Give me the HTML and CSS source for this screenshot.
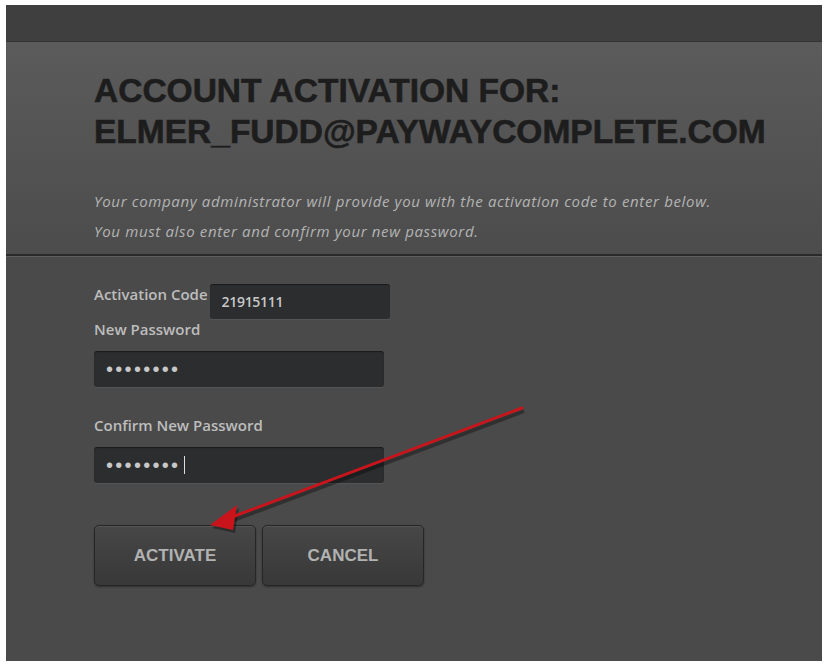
FILE: index.html
```html
<!DOCTYPE html>
<html>

<head>
    <meta charset="UTF-8">
    <title>Account Activation</title>
    <link rel="stylesheet" href="styles.css">
</head>

<body>
    <div class="frame">
        <div class="top-bar"></div>
        <div class="panel">
            <h1 class="title">ACCOUNT ACTIVATION FOR:<br>ELMER_FUDD@PAYWAYCOMPLETE.COM</h1>
            <p class="intro">Your company administrator will provide you with the activation code to enter below.</p>
            <p class="intro">You must also enter and confirm your new password.</p>
        </div>
        <form class="activation-form">
            <div class="code-row">
                <label for="code">Activation Code</label>
                <input type="text" id="code" class="field field-code" value="21915111">
            </div>
            <label for="newPass">New Password</label>
            <input type="password" id="newPass" class="field" value="12345678">
            <label for="confirmPass" class="label-confirm">Confirm New Password</label>
            <div class="field-wrap">
                <input type="password" id="confirmPass" class="field" value="12345678">
                <span class="caret"></span>
            </div>
            <div class="buttons">
                <button type="button" class="btn">ACTIVATE</button>
                <button type="button" class="btn">CANCEL</button>
            </div>
        </form>

        <!-- annotation arrow -->
        <svg class="arrow" width="816" height="656" viewBox="0 0 816 656">
            <g transform="translate(2,3)" stroke="rgba(0,0,0,0.35)" fill="rgba(0,0,0,0.35)">
                <line x1="516" y1="403" x2="226" y2="512" stroke-width="4" />
                <polygon points="204,520 231,500 227,525" stroke="none" />
            </g>
            <line x1="516" y1="403" x2="226" y2="512" stroke="#c8141a" stroke-width="3" stroke-linecap="round" />
            <polygon points="204,520 231,500 227,525" fill="#c8141a" />
        </svg>
    </div>
</body>

</html>
```

FILE: styles.css
```css
/* Account activation page */
body {
    margin: 0;
    padding: 0;
    background-color: #fff;
    font-family: "Open Sans", Lato, sans-serif;
}

.frame {
    position: relative;
    width: 816px;
    height: 656px;
    margin: 5px 0 0 6px;
    background-color: #4a4a4a;
    overflow: hidden;
}

.top-bar {
    height: 36px;
    background-color: #3f3f3f;
    border-bottom: 1px solid #343434;
}

.panel {
    padding: 28px 0 0 88px;
    height: 184px;
    background: linear-gradient(to bottom, #5b5b5b 0%, #555 40%, #4c4c4c 100%);
    border-bottom: 2px solid #2a2a2a;
    box-shadow: 0 1px 0 #5e5e5e;
}

.title {
    margin: 0 0 34px 0;
    font-family: "Liberation Sans", Arial, sans-serif;
    font-size: 33.5px;
    line-height: 41px;
    font-weight: bold;
    color: #1d1d1d;
    -webkit-text-stroke: 0.6px #1d1d1d;
}

.intro {
    margin: 0;
    font-size: 15px;
    line-height: 30px;
    font-style: italic;
    letter-spacing: 0.65px;
    color: #b4b4b4;
}

.activation-form {
    padding: 28px 0 0 88px;
    display: flex;
    flex-direction: column;
    align-items: flex-start;
}

.activation-form label {
    font-size: 15px;
    line-height: 20px;
    font-weight: 600;
    color: #bdbdbd;
}

.code-row {
    display: flex;
    align-items: flex-start;
}

.field {
    box-sizing: border-box;
    width: 290px;
    height: 36px;
    margin-top: 12px;
    padding: 0 12px;
    border: none;
    border-radius: 3px;
    background-color: #2b2d2f;
    box-shadow: 0 1px 0 #555, inset 0 1px 1px rgba(0, 0, 0, 0.4);
    color: #c8c8c8;
    font-family: "Liberation Sans", Arial, sans-serif;
    font-size: 20px;
    letter-spacing: 2.3px;
}

.field-code {
    width: 180px;
    height: 35px;
    margin: 0 0 0 2px;
    font-family: "Open Sans", sans-serif;
    font-size: 14px;
    font-weight: 600;
    letter-spacing: -0.3px;
}

.label-confirm {
    margin-top: 28px;
}

.field-wrap {
    position: relative;
}

.caret {
    position: absolute;
    left: 90px;
    top: 21px;
    width: 1px;
    height: 18px;
    background-color: #ddd;
}

.buttons {
    display: flex;
    gap: 6px;
    margin-top: 42px;
}

.btn {
    width: 162px;
    height: 61px;
    border: 1px solid #262626;
    border-radius: 5px;
    background: linear-gradient(to bottom, #474747, #383838);
    box-shadow: inset 0 1px 0 #555, 0 1px 2px rgba(0, 0, 0, 0.4);
    color: #b2b2b2;
    font-family: "Liberation Sans", Arial, sans-serif;
    font-size: 17px;
    font-weight: bold;
}

.arrow {
    position: absolute;
    left: 0;
    top: 0;
    pointer-events: none;
}
```
